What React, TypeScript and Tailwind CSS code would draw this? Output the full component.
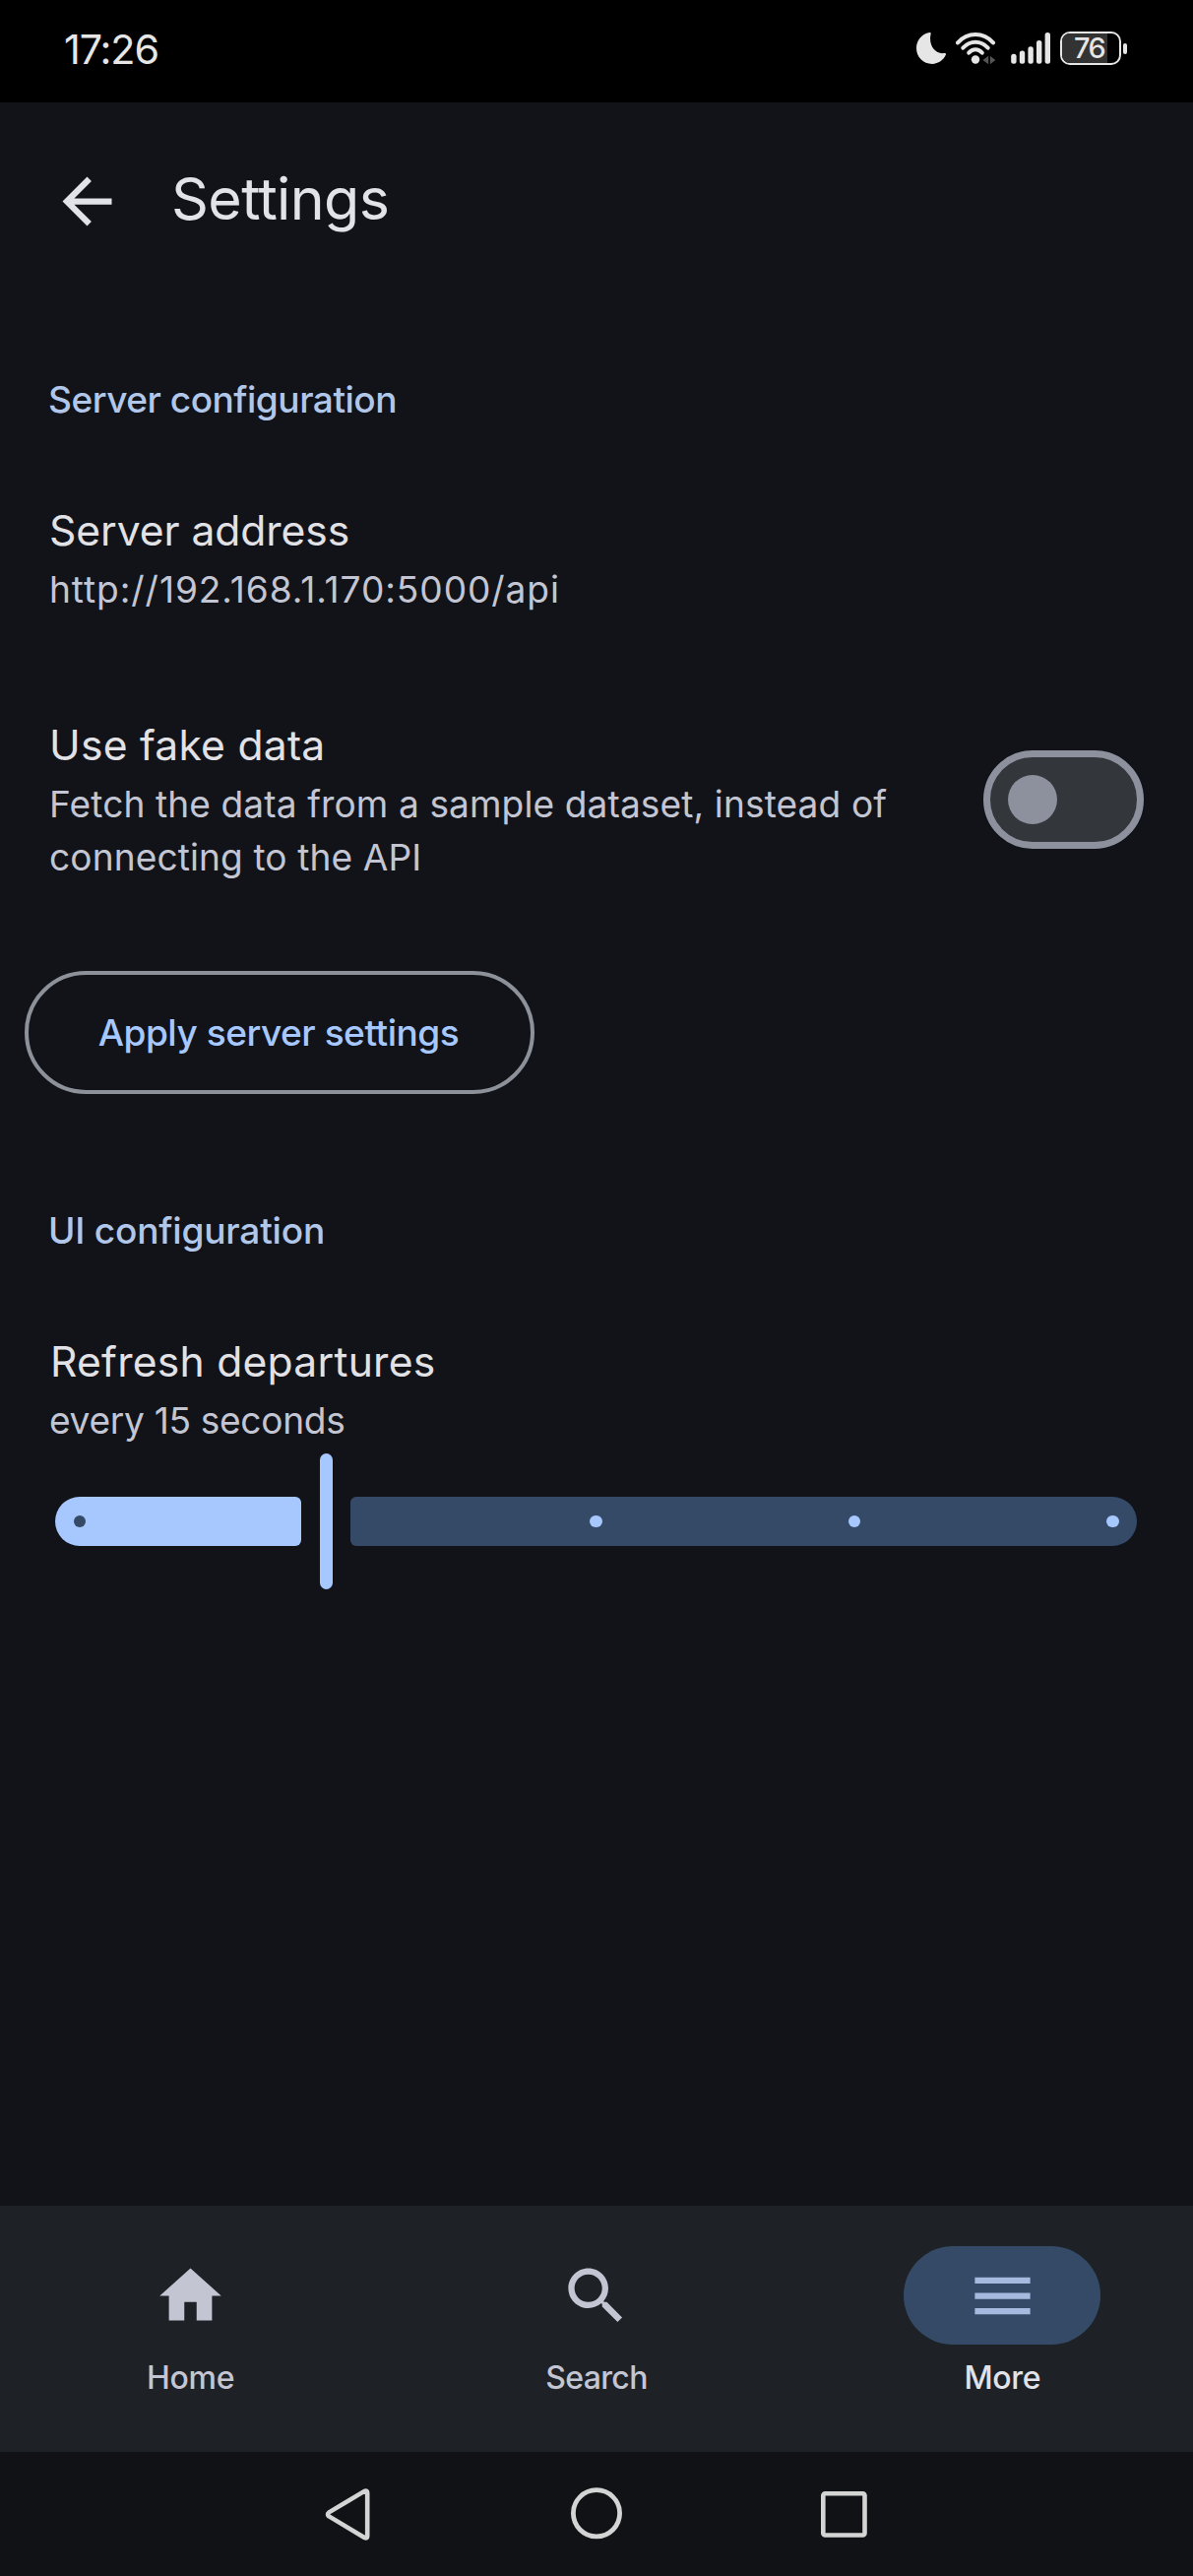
import type { ReactNode } from 'react';

function StatusBar() {
  return (
    <div className="flex h-[104px] items-start bg-black pt-8 pl-[65px] text-[#e6e6e6]">
      <div className="mt-[-8px] text-[41.3px] leading-[52px] font-normal tracking-[-1.1px]">17:26</div>
      <div className="mr-[67px] ml-auto flex items-start">
        <svg width="30" height="34" viewBox="931 32 30 34" fill="currentColor">
          <path d="M944.3 33.1C936 34.6 931 41.4 931 49c0 9 7 15.9 16 15.9 6.3 0 11.7-3.8 13.9-9.3.4-1-.4-1.8-1.4-1.6-9.5 1.5-16.500-8-13.900-19.400.3-1-.3-1.700-1.300-1.500Z" />
        </svg>
        <svg className="ml-2.5" width="41" height="34" viewBox="971 32 41 34" fill="none" stroke="currentColor" strokeWidth="4" strokeLinecap="round">
          <path d="M973 43.4C983 32.3 999 32.3 1009 43.4" />
          <path d="M978.3 48.7C985.5 40.8 996.5 40.8 1003.7 48.7" />
          <path d="M984.2 53.7C988.2 49.2 993.8 49.2 997.8 53.7" />
          <circle cx="991" cy="60.5" r="4.2" fill="currentColor" stroke="none" />
          <path d="M998.5 61l5.7-4.3v8.6ZM1011.3 61l-5.4-4.3v8.6Z" fill="#555555" stroke="none" />
        </svg>
        <svg className="ml-[15px]" width="40" height="34" viewBox="1027 32 40 34" fill="currentColor">
          <rect x="1027.2" y="54.8" width="5.4" height="10" rx="2.5" />
          <rect x="1035.8" y="51.5" width="5.4" height="13.3" rx="2.5" />
          <rect x="1044.4" y="47.3" width="5.4" height="17.5" rx="2.5" />
          <rect x="1053" y="41" width="5.4" height="23.8" rx="2.5" />
          <rect x="1061.6" y="33" width="5.4" height="31.8" rx="2.5" />
        </svg>
        <div className="relative ml-2.5 flex h-[34px] w-[62px] items-center overflow-hidden rounded-[10px] border-2 border-[#e6e6e6] pl-[12px]">
          <span className="absolute inset-y-0 left-0 w-[46px] bg-[#333333]" />
          <span className="relative text-[28.9px] leading-[30px] font-medium tracking-[-1.5px]">76</span>
        </div>
        <div className="mt-[11.5px] ml-0.5 h-[11px] w-1 rounded-[2px] bg-[#e6e6e6]" />
      </div>
    </div>
  );
}

function MaterialIcon({ d, className }: { d: string; className?: string }) {
  return (
    <svg width="75" height="75" viewBox="0 0 24 24" fill="currentColor" className={className}>
      <path d={d} />
    </svg>
  );
}

function SectionLabel({ children, className }: { children: ReactNode; className: string }) {
  return <h2 className={`pl-[49px] text-[37.1px] leading-[54px] font-medium text-[#b1c7e9] ${className}`}>{children}</h2>;
}

function Title({ children, className }: { children: ReactNode; className: string }) {
  return <div className={`text-[42.6px] leading-[65px] text-[#e2e2e6] ${className}`}>{children}</div>;
}

function Sub({ children, className }: { children: ReactNode; className: string }) {
  return <div className={`mt-px text-[37.1px] leading-[54px] text-[#c3c6d2] ${className}`}>{children}</div>;
}

function Slider() {
  return (
    <div className="mt-[6px] ml-[56px] flex h-[138px] items-center">
      <div className="flex h-[50px] w-[250px] items-center rounded-l-[25px] rounded-r-[6px] bg-[#a6c8ff] pl-[18.5px]">
        <span className="size-[12.5px] rounded-full bg-[#344a67]" />
      </div>
      <div className="ml-[19px] h-[138px] w-[13px] rounded-full bg-[#a6c8ff]" />
      <div className="ml-[18px] flex h-[50px] w-[799px] items-center justify-between rounded-l-[6px] rounded-r-[25px] bg-[#344a67] pr-[18.5px] pl-[243px]">
        <span className="size-[12.5px] rounded-full bg-[#a6c8ff]" />
        <span className="size-[12.5px] rounded-full bg-[#a6c8ff]" />
        <span className="size-[12.5px] rounded-full bg-[#a6c8ff]" />
      </div>
    </div>
  );
}

function NavItem({ label, d, active, tracking }: { label: string; d: string; active?: boolean; tracking: string }) {
  return (
    <div className="flex flex-1 flex-col items-center">
      <div className={`flex h-[100px] w-[200px] items-center justify-center rounded-full ${active ? 'bg-[#344a67] text-[#a6badf]' : 'text-[#c3c6d2]'}`}>
        <MaterialIcon d={d} />
      </div>
      <div className={`mt-[9px] text-[32px] leading-[50px] font-medium ${tracking} ${active ? 'text-[#e2e2e9]' : 'text-[#c3c6d2]'}`}>{label}</div>
    </div>
  );
}

export default function App() {
  return (
    <div className="flex h-[2616px] w-[1212px] flex-col bg-[#111318] font-['Inter',sans-serif]">
      <StatusBar />
      <header className="flex h-[200px] items-center pl-[51px] text-[#e2e2e9]">
        <MaterialIcon d="M20 11H7.83l5.59-5.59L12 4l-8 8 8 8 1.41-1.41L7.83 13H20v-2z" />
        <h1 className="ml-[48px] pb-[4px] text-[59.1px] leading-[80px] tracking-[-0.62px]">Settings</h1>
      </header>

      <main className="flex flex-1 flex-col">
        <SectionLabel className="mt-[75px] tracking-[-0.5px]">Server configuration</SectionLabel>
        <div className="mt-[73px] pl-[50px]">
          <Title className="tracking-[-0.06px]">Server address</Title>
          <Sub className="tracking-[0.93px]">http://192.168.1.170:5000/api</Sub>
        </div>

        <div className="mt-[98px] flex items-start justify-between pr-[50px] pl-[50px]">
          <div>
            <Title className="tracking-[0.24px]">Use fake data</Title>
            <Sub className="w-[900px] tracking-[0.11px]">
              Fetch the data from a sample dataset, instead of
              <br />
              connecting to the API
            </Sub>
          </div>
          <div className="mt-[38px] flex h-[100px] w-[163px] items-center rounded-full border-[7px] border-[#8d919d] bg-[#33363b] pl-[18px]">
            <span className="size-[50px] rounded-full bg-[#8d919d]" />
          </div>
        </div>

        <button className="mt-[88px] ml-[25px] flex h-[125px] w-[518px] items-center justify-center rounded-full border-[4px] border-[#8d9199] pr-[2px] text-[37.1px] leading-[54px] font-medium tracking-[-0.48px] text-[#a6c8ff]">
          Apply server settings
        </button>

        <SectionLabel className="mt-[112px] tracking-[-0.2px]">UI configuration</SectionLabel>
        <div className="mt-[73px] pl-[50px]">
          <Title className="pl-px tracking-[0.25px]">Refresh departures</Title>
          <Sub className="tracking-[-0.3px]">every 15 seconds</Sub>
        </div>
        <Slider />
      </main>

      <nav className="flex h-[250px] gap-[25px] bg-[#1e2125] pt-[41px]">
        <NavItem label="Home" d="M10 20v-6h4v6h5v-8h3L12 3 2 12h3v8z" tracking="tracking-[-0.22px]" />
        <NavItem
          label="Search"
          d="M15.5 14h-.79l-.28-.27C15.41 12.59 16 11.11 16 9.5 16 5.91 13.09 3 9.5 3S3 5.91 3 9.5 5.91 16 9.5 16c1.61 0 3.09-.59 4.23-1.57l.27.28v.79l5 4.99L20.49 19l-4.99-5zm-6 0C7.01 14 5 11.99 5 9.5S7.01 5 9.5 5 14 7.01 14 9.5 11.99 14 9.5 14z"
          tracking="tracking-[-0.65px]"
        />
        <NavItem label="More" d="M3 18h18v-2H3v2zm0-5h18v-2H3v2zm0-7v2h18V6H3z" active tracking="tracking-[-0.4px]" />
      </nav>

      <div className="flex h-[126px] justify-center bg-[#111215] pt-[34px] text-[#d4d4d4]">
        <div className="flex w-[252px] justify-center">
          <svg width="48" height="58" viewBox="330 2524 48 58" fill="none" stroke="currentColor" strokeWidth="4.6" strokeLinejoin="round">
            <path d="M334.2 2551.4L370.2 2529.9Q373.2 2528.6 373.2 2531.6V2575.4Q373.2 2578.4 370.2 2577L334.2 2555.4Q331.800 2553.400 334.200 2551.400Z" />
          </svg>
        </div>
        <div className="flex w-[252px] justify-center">
          <svg width="58" height="58" viewBox="577 2524 58 58" fill="none" stroke="currentColor" strokeWidth="4.8">
            <circle cx="606" cy="2552.3" r="23.6" />
          </svg>
        </div>
        <div className="flex w-[252px] justify-center">
          <svg width="58" height="58" viewBox="829 2524 58 58" fill="none" stroke="currentColor" strokeWidth="4.6">
            <rect x="836.3" y="2532.3" width="42.2" height="42.2" rx="2" />
          </svg>
        </div>
      </div>
    </div>
  );
}
